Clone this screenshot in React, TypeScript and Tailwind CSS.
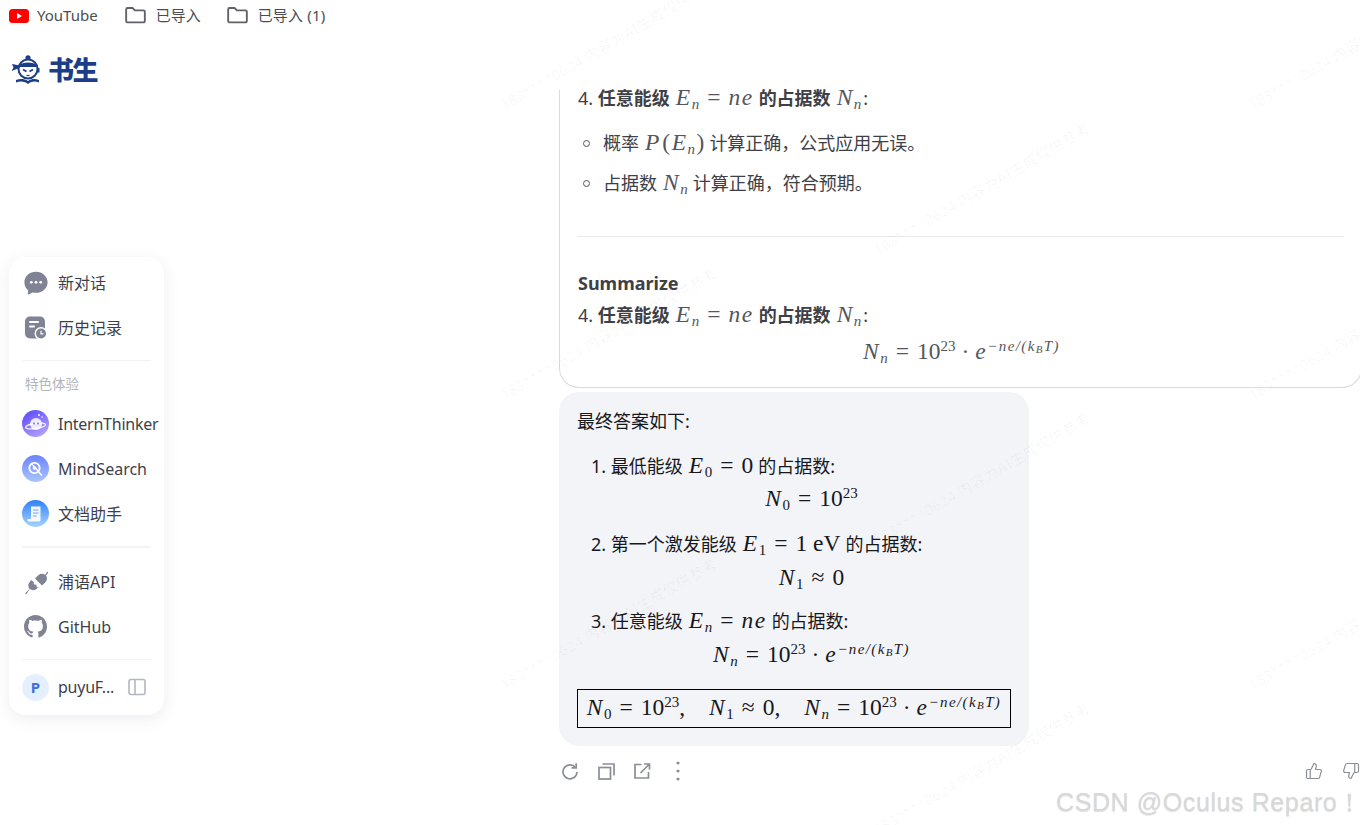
import React from "react";
import { ThumbsUp, ThumbsDown } from "lucide-react";

const CJK = '"Noto Sans","Noto Sans CJK SC",sans-serif';

function I({ children }: { children: React.ReactNode }) {
  return <span className="italic tracking-[1.5px]">{children}</span>;
}
function Sub({ children, it = true }: { children: React.ReactNode; it?: boolean }) {
  return <span className={`text-[15px] leading-[0] align-[-4px] ${it ? "italic" : ""}`}>{children}</span>;
}
function Sup({ children }: { children: React.ReactNode }) {
  return <span className="text-[15px] leading-[0] align-[8px]">{children}</span>;
}
function M({ children, className = "" }: { children: React.ReactNode; className?: string }) {
  return <span className={`font-['Liberation_Serif',serif] font-normal text-[23.5px] leading-[0] ml-[6px] mr-[5px] ${className}`}>{children}</span>;
}
const Eq = () => <span className="mx-[8px]">=</span>;
const Approx = () => <span className="mx-[8px]">≈</span>;

function Exp() {
  return (
    <span className="text-[15px] leading-[0] align-[8px] italic tracking-[1.4px]">
      −ne/(k<span className="text-[11px] leading-[0] align-[-2px]">B</span>T)
    </span>
  );
}
const Nn = () => (<><I>N</I><Sub>n</Sub></>);
const En = () => (<><I>E</I><Sub>n</Sub></>);
function NnFormula() {
  return (<><Nn /><Eq />10<Sup>23</Sup><span className="mx-[6px]">·</span><I>e</I><Exp /></>);
}

function Row({ h = 28, mt = 0, children, className = "" }: { h?: number; mt?: number; children: React.ReactNode; className?: string }) {
  return (
    <div className={`whitespace-nowrap ${className}`} style={{ height: h, lineHeight: `${h}px`, marginTop: mt }}>
      {children}
    </div>
  );
}

function Folder() {
  return (
    <svg width="21" height="17" viewBox="1 3 18 14.500" fill="none" stroke="#5f6368" strokeWidth="1.600">
      <path d="M2 5a1.200 1.200 0 0 1 1.200-1.200h4.300l2 2h7.300A1.200 1.200 0 0 1 18 7v8a1.200 1.200 0 0 1-1.200 1.200H3.200A1.200 1.200 0 0 1 2 15z" />
    </svg>
  );
}

function Mascot() {
  const n = "#1c3d87";
  return (
    <svg width="31" height="30" viewBox="0 0 31 30" fill="none">
      <circle cx="17" cy="2.800" r="2.600" fill={n} />
      <path d="M10.500 8c2-3.500 11-3.500 13 0z" fill={n} />
      <circle cx="17" cy="14" r="9.500" fill="#fff" stroke={n} strokeWidth="2" />
      <path d="M8 10.500c3-4 15-4 18 0l-.5 1.500H8.500z" fill={n} />
      <path d="M8.500 10.500 1 9l1.500 3.500L.5 16l8-3z" fill={n} />
      <path d="m12 14.500 3.500 2M22 14.500l-3.500 2" stroke={n} strokeWidth="1.800" />
      <path d="M26 13h2.500v4.500H26z" fill={n} />
      <path d="M15.500 20.500h3" stroke={n} strokeWidth="1.200" />
      <path d="M5 25c4-1.500 8-1.500 12 1 4-2.500 7-2.500 11-1v2.500c-4-1.500-7-1.500-11 1.500-4-3-8-3-12-1.500z" fill={n} />
    </svg>
  );
}

function ChatIcon() {
  return (
    <svg width="24" height="24" viewBox="0 0 24 24">
      <path d="M12 .8C5.500.8.400 5.400.400 11.400c0 3.200 1.500 6 3.800 8l-.5 3.400c-.1.600.5 1 1 .7l3.700-2.100c1.100.3 2.300.4 3.600.4 6.400 0 11.600-4.600 11.600-10.400S18.400.8 12 .8z" fill="#7f8394" />
      <circle cx="7.300" cy="11.300" r="1.400" fill="#fff" />
      <circle cx="12" cy="11.300" r="1.400" fill="#fff" />
      <circle cx="16.700" cy="11.300" r="1.400" fill="#fff" />
    </svg>
  );
}
function HistoryIcon() {
  return (
    <svg width="24" height="24" viewBox="0 0 24 24">
      <rect x="1" y="0.500" width="20" height="22" rx="5" fill="#7f8394" />
      <rect x="5" y="5" width="10" height="2" rx="1" fill="#fff" />
      <rect x="5" y="9.500" width="6" height="2" rx="1" fill="#fff" />
      <circle cx="17" cy="17.500" r="6.500" fill="#fff" />
      <circle cx="17" cy="17.500" r="5" fill="#7f8394" />
      <path d="M17 14.800v3h2.400" stroke="#fff" strokeWidth="1.200" fill="none" />
    </svg>
  );
}
function ThinkerIcon() {
  return (
    <svg width="27" height="27" viewBox="0 0 27 27">
      <defs>
        <linearGradient id="g1" x1="0.200" y1="0" x2="0.800" y2="1">
          <stop offset="0" stopColor="#5b4bfb" />
          <stop offset="1" stopColor="#b9a6fb" />
        </linearGradient>
      </defs>
      <circle cx="13.500" cy="13.500" r="13.500" fill="url(#g1)" />
      <circle cx="14" cy="14" r="6" fill="#fff" opacity="0.85" />
      <ellipse cx="13.500" cy="16" rx="10" ry="2.600" fill="none" stroke="#fff" strokeWidth="1.200" transform="rotate(-8 13.500 16)" opacity="0.9" />
      <circle cx="12" cy="13.500" r="1" fill="#7f6cf9" />
      <circle cx="16" cy="13.500" r="1" fill="#7f6cf9" />
      <circle cx="17" cy="5" r="1" fill="#fff" />
      <circle cx="20" cy="7" r="0.800" fill="#fff" />
    </svg>
  );
}
function SearchIcon() {
  return (
    <svg width="27" height="27" viewBox="0 0 27 27" fill="none">
      <defs>
        <linearGradient id="g2" x1="0.500" y1="0" x2="0.500" y2="1">
          <stop offset="0" stopColor="#6c83fb" />
          <stop offset="1" stopColor="#a9c6fd" />
        </linearGradient>
      </defs>
      <circle cx="13.500" cy="13.500" r="13.500" fill="url(#g2)" />
      <circle cx="12.500" cy="13" r="5.200" stroke="#fff" strokeWidth="1.800" />
      <circle cx="12.500" cy="13" r="1.800" fill="#fff" />
      <path d="m16.500 17 3.500 3.500M9 8l8 9" stroke="#fff" strokeWidth="1.500" />
    </svg>
  );
}
function DocIcon() {
  return (
    <svg width="27" height="27" viewBox="0 0 27 27" fill="none">
      <defs>
        <linearGradient id="g3" x1="0.500" y1="0" x2="0.500" y2="1">
          <stop offset="0" stopColor="#2f80fb" />
          <stop offset="1" stopColor="#a8d4fd" />
        </linearGradient>
      </defs>
      <circle cx="13.500" cy="13.500" r="13.500" fill="url(#g3)" />
      <path d="M9 6.500h9.500v13.500a1.500 1.500 0 0 1-1.500 1.500H7a1.500 1.500 0 0 1-1.500-1.500V19H9z" fill="#fff" opacity="0.92" />
      <path d="M11 10h5.500M11 13h5.500M11 16h3.500" stroke="#6aa6f8" strokeWidth="1.200" />
    </svg>
  );
}
function PlugIcon() {
  return (
    <svg width="24" height="24" viewBox="0 0 24 24" fill="#7f8394">
      <path d="M1 23.500 5.500 19c-1.800-2.500-1.500-5.500.5-7.500L7.500 10l7 7-1.500 1.500c-2 2-4.800 2.200-7.200.6L2.500 24z" />
      <path d="M11 8.500 14 5.500c2-2 4.500-2.300 7-.8L23.500 1.500l1 1-2.500 3c1.500 2.500 1.200 5-.8 7L18 15.500z" />
      <path d="m9.500 13.500 2.500-2.500 1.500 1.500-2.500 2.500zM12 16l2.500-2.500 1.500 1.500-2.500 2.500z" fill="#fff" />
    </svg>
  );
}
function GithubIcon() {
  return (
    <svg width="23" height="23" viewBox="0 0 16 16" fill="#7f8394">
      <path d="M8 0C3.580 0 0 3.580 0 8c0 3.540 2.290 6.530 5.470 7.590.4.070.55-.17.55-.38 0-.19-.01-.82-.01-1.490-2.010.37-2.530-.49-2.690-.94-.09-.23-.48-.94-.82-1.130-.28-.15-.68-.52-.01-.53.63-.01 1.080.58 1.230.82.72 1.210 1.870.87 2.330.66.070-.52.28-.87.51-1.070-1.780-.2-3.640-.89-3.640-3.950 0-.87.310-1.590.82-2.150-.08-.2-.36-1.020.08-2.120 0 0 .67-.21 2.200.82.640-.18 1.320-.27 2-.27s1.360.09 2 .27c1.530-1.040 2.200-.82 2.200-.82.44 1.100.16 1.920.08 2.120.51.56.82 1.270.82 2.150 0 3.070-1.870 3.750-3.650 3.950.29.25.54.73.54 1.480 0 1.070-.01 1.930-.01 2.200 0 .21.15.46.55.38A8.010 8.010 0 0 0 16 8c0-4.420-3.580-8-8-8z" />
    </svg>
  );
}

function NavRow({ icon, label, tight = false }: { icon: React.ReactNode; label: string; tight?: boolean }) {
  return (
    <div className="flex items-center h-[45px]">
      <div className="w-[27px] flex justify-center shrink-0 ml-[13px]">{icon}</div>
      <span className={`ml-[9px] text-[16px] text-[#3d3f4a] whitespace-nowrap ${tight ? "tracking-[-0.25px]" : ""}`}>{label}</span>
    </div>
  );
}

const WM: [number, number][] = [
  [507, 113], [880, 258], [1255, 113], [507, 403], [880, 548], [1255, 403], [507, 693], [880, 838], [1255, 693],
];

export default function App() {
  return (
    <div className="relative w-[1360px] h-[825px] overflow-hidden bg-white" style={{ fontFamily: CJK }}>
      {/* bookmarks */}
      <div className="flex items-center h-[31px] pl-[9px] text-[15px] text-[#4a4d52] whitespace-nowrap">
        <svg width="20" height="14" viewBox="0 0 20 14">
          <rect width="20" height="14" rx="3.500" fill="#ff0000" />
          <path d="M8 4v6l5-3z" fill="#fff" />
        </svg>
        <span className="ml-[8px]">YouTube</span>
        <span className="ml-[27px] flex"><Folder /></span>
        <span className="ml-[10px]">已导入</span>
        <span className="ml-[26px] flex"><Folder /></span>
        <span className="ml-[10px] tracking-[0.2px]">已导入 (1)</span>
      </div>

      <div className="flex items-start">
        {/* left */}
        <div className="w-[559px] shrink-0 pl-[9px] flex flex-col">
          <div className="flex items-center h-[30px] mt-[24px] ml-[2px]">
            <Mascot />
            <span className="ml-[6px] text-[26px] leading-[30px] font-black tracking-[-1.500px] text-[#1c3d87] -translate-y-[1px]" style={{ fontFamily: '"Noto Sans CJK SC",sans-serif' }}>书生</span>
          </div>
          <div className="w-[155px] mt-[172px] bg-white rounded-[16px] shadow-[0_4px_16px_rgba(50,60,100,0.09)] pt-[3px] pb-[8px]">
            <NavRow icon={<ChatIcon />} label="新对话" />
            <NavRow icon={<HistoryIcon />} label="历史记录" />
            <div className="h-px bg-[#f1f2f5] mx-[13px] mt-[10px]" />
            <div className="mt-[13px] ml-[16px] h-[20px] leading-[20px] text-[13.500px] text-[#b3b5bd]">特色体验</div>
            <div className="mt-[7px]">
              <NavRow icon={<ThinkerIcon />} label="InternThinker" tight />
              <NavRow icon={<SearchIcon />} label="MindSearch" />
              <NavRow icon={<DocIcon />} label="文档助手" />
            </div>
            <div className="h-[2px] bg-[#f3f4f7] mx-[13px] mt-[10px]" />
            <div className="mt-[11px]">
              <NavRow icon={<PlugIcon />} label="浦语API" />
              <NavRow icon={<GithubIcon />} label="GitHub" />
            </div>
            <div className="h-px bg-[#f1f2f5] mx-[13px] mt-[10px]" />
            <div className="flex items-center h-[40px] mt-[7px] pl-[13px]">
              <div className="w-[27px] h-[27px] rounded-full bg-[#e5f0ff] flex items-center justify-center text-[15px] font-bold text-[#3a6fe0]">P</div>
              <span className="ml-[9px] text-[16px] text-[#3d3f4a] tracking-[-0.25px]">puyuF...</span>
              <svg className="ml-[14px]" width="18" height="18" viewBox="0 0 18 18" fill="none" stroke="#b4b6c0" strokeWidth="1.600">
                <rect x="1" y="1.500" width="16" height="15" rx="2" />
                <path d="M7 1.500v15" />
              </svg>
            </div>
          </div>
        </div>

        {/* right */}
        <div className="w-[803px] shrink-0 mt-[59px]">
          <div className="border-l border-b border-r border-[#d9d9de] rounded-bl-[20px] rounded-br-[20px] pl-[18px] pr-[17px] pb-[21px] text-[18px] text-[#3f4046]">
            <Row h={16}>
              4. <b>任意能级</b><M className="text-[#55565c]"><En /><Eq /><I>ne</I></M><b>的占据数</b><M className="text-[#55565c]"><Nn /></M><span className="-ml-[3px]">:</span>
            </Row>
            <div className="pl-[25px]">
              <Row mt={23} className="relative">
                <span className="absolute -left-[20px] top-[11px] w-[7px] h-[7px] rounded-full border border-[#555]" />
                概率<M className="text-[#55565c]"><I>P</I><span className="mx-[1.500px]">(</span><En /><span className="ml-[1.500px]">)</span></M>计算正确，公式应用无误。
              </Row>
              <Row mt={12} className="relative">
                <span className="absolute -left-[20px] top-[11px] w-[7px] h-[7px] rounded-full border border-[#555]" />
                占据数<M className="text-[#55565c]"><Nn /></M>计算正确，符合预期。
              </Row>
            </div>
            <div className="h-px bg-[#e8e8ea] mt-[39px]" />
            <Row mt={32} className="font-bold">Summarize</Row>
            <Row mt={4}>
              4. <b>任意能级</b><M className="text-[#55565c]"><En /><Eq /><I>ne</I></M><b>的占据数</b><M className="text-[#55565c]"><Nn /></M><span className="-ml-[3px]">:</span>
            </Row>
            <Row mt={9} className="text-center">
              <M className="text-[#55565c]"><NnFormula /></M>
            </Row>
          </div>

          <div className="mt-[4px] w-[470px] rounded-[20px] bg-[#f3f4f8] pt-[15px] pb-[18px] px-[18px] text-[18px] text-[#17181c]">
            <Row>最终答案如下:</Row>
            <div className="pl-[14px]">
              <Row mt={17}>1. 最低能级<M><I>E</I><Sub it={false}>0</Sub><Eq />0</M>的占据数:</Row>
              <Row mt={5} className="pl-[20px] text-center"><M><I>N</I><Sub it={false}>0</Sub><Eq />10<Sup>23</Sup></M></Row>
              <Row mt={17}>2. 第一个激发能级<M><I>E</I><Sub it={false}>1</Sub><Eq />1 eV</M>的占据数:</Row>
              <Row mt={6} className="pl-[20px] text-center"><M><I>N</I><Sub it={false}>1</Sub><Approx />0</M></Row>
              <Row mt={15}>3. 任意能级<M><En /><Eq /><I>ne</I></M>的占据数:</Row>
              <Row mt={6} className="pl-[20px] text-center"><M><NnFormula /></M></Row>
            </div>
            <div className="mt-[20px] h-[39px] w-[434px] border border-black flex items-center justify-center whitespace-nowrap">
              <M className="!mx-0">
                <I>N</I><Sub it={false}>0</Sub><Eq />10<Sup>23</Sup>,<span className="inline-block w-[24px]" />
                <I>N</I><Sub it={false}>1</Sub><Approx />0,<span className="inline-block w-[24px]" />
                <NnFormula />
              </M>
            </div>
          </div>

          <div className="flex items-center h-[24px] mt-[13px] pl-[2px] pr-[2px] text-[#8b8e96]">
            <span className="w-[18px] flex justify-center">
              <svg width="18" height="18" viewBox="0 0 18 18" fill="none" stroke="#8b8e96" strokeWidth="1.700">
                <path d="M14.500 5.500A7 7 0 1 0 16 10" />
                <path d="M15.200 1.200v4.600h-4.600" />
              </svg>
            </span>
            <span className="w-[18px] ml-[18px] flex justify-center">
              <svg width="17" height="17" viewBox="0 0 17 17" fill="none" stroke="#8b8e96" strokeWidth="1.700">
                <rect x="1" y="4.500" width="11.500" height="11.500" />
                <path d="M4.500 1h11.500v11.500" />
              </svg>
            </span>
            <span className="w-[18px] ml-[18px] flex justify-center">
              <svg width="18" height="18" viewBox="0 0 18 18" fill="none" stroke="#8b8e96" strokeWidth="1.700">
                <path d="M8.500 2.500H2V16h13.500V10" />
                <path d="M7.500 11 16 2.500M11 2h5.500v5.500" />
              </svg>
            </span>
            <span className="w-[18px] ml-[18px] flex justify-center">
              <svg width="18" height="20" viewBox="0 0 18 20" fill="#8b8e96">
                <circle cx="9" cy="2" r="1.600" />
                <circle cx="9" cy="10" r="1.600" />
                <circle cx="9" cy="18" r="1.600" />
              </svg>
            </span>
            <span className="ml-auto flex gap-[19px]">
              <ThumbsUp size={18} strokeWidth={1.6} />
              <ThumbsDown size={18} strokeWidth={1.6} />
            </span>
          </div>
        </div>
      </div>

      {/* watermark overlay */}
      {WM.map(([x, y]) => (
        <span
          key={`${x}-${y}`}
          className="absolute origin-bottom-left rotate-[-30deg] whitespace-nowrap text-[15px] font-semibold text-[rgba(0,0,0,0.028)] pointer-events-none"
          style={{ left: x, top: y - 20 }}
        >
          183****0624 内容为AI生成仅供参考
        </span>
      ))}

      <span className="absolute left-[1056px] top-[786px] text-[25px] leading-[32px] whitespace-nowrap tracking-[0.6px] text-[#d8d8d8] [text-shadow:0_1px_1px_rgba(0,0,0,0.12)] font-['Liberation_Sans',sans-serif]">
        CSDN @Oculus Reparo！
      </span>
    </div>
  );
}
